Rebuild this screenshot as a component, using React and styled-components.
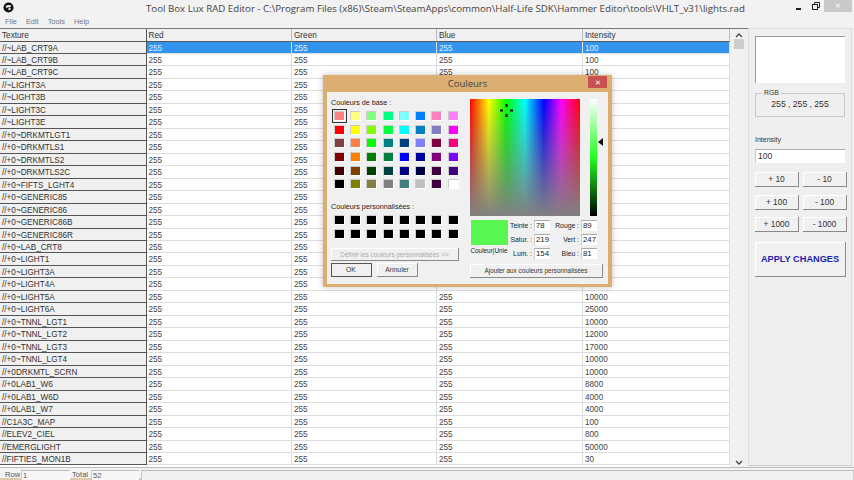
import React from "react";
import styled, { createGlobalStyle } from "styled-components";

const GlobalStyle = createGlobalStyle`
  html, body { margin: 0; padding: 0; background: #f0f0f0; overflow: hidden; }
  * { box-sizing: border-box; }
`;

const rows = [
  ["//~LAB_CRT9A", 100], ["//~LAB_CRT9B", 100], ["//~LAB_CRT9C", 100], ["//~LIGHT3A", 100],
  ["//~LIGHT3B", 100], ["//~LIGHT3C", 100], ["//~LIGHT3E", 100], ["//+0~DRKMTLGT1", 100],
  ["//+0~DRKMTLS1", 100], ["//+0~DRKMTLS2", 100], ["//+0~DRKMTLS2C", 100], ["//+0~FIFTS_LGHT4", 100],
  ["//+0~GENERIC85", 100], ["//+0~GENERIC86", 100], ["//+0~GENERIC86B", 100], ["//+0~GENERIC86R", 100],
  ["//+0~LAB_CRT8", 100], ["//+0~LIGHT1", 100], ["//+0~LIGHT3A", 100], ["//+0~LIGHT4A", 11000],
  ["//+0~LIGHT5A", 10000], ["//+0~LIGHT6A", 25000], ["//+0~TNNL_LGT1", 10000], ["//+0~TNNL_LGT2", 12000],
  ["//+0~TNNL_LGT3", 17000], ["//+0~TNNL_LGT4", 10000], ["//+0DRKMTL_SCRN", 10000], ["//+0LAB1_W6", 8800],
  ["//+0LAB1_W6D", 4000], ["//+0LAB1_W7", 4000], ["//C1A3C_MAP", 100], ["//ELEV2_CIEL", 800],
  ["//EMERGLIGHT", 50000], ["//FIFTIES_MON1B", 30],
];

const swatches = [
  "#ff8080", "#ffff80", "#80ff80", "#00ff80", "#80ffff", "#0080ff", "#ff80c0", "#ff80ff",
  "#ff0000", "#ffff00", "#80ff00", "#00ff40", "#00ffff", "#0080c0", "#8080c0", "#ff00ff",
  "#804040", "#ff8040", "#00ff00", "#008080", "#004080", "#8080ff", "#800040", "#ff0080",
  "#800000", "#ff8000", "#008000", "#008040", "#0000ff", "#0000a0", "#800080", "#8000ff",
  "#400000", "#804000", "#004000", "#004040", "#000080", "#000040", "#400040", "#400080",
  "#000000", "#808000", "#808040", "#808080", "#408080", "#c0c0c0", "#400040", "#ffffff",
];

const Page = styled.div`
  position: relative;
  width: 854px;
  height: 480px;
  display: flex;
  flex-direction: column;
  background: #f0f0f0;
  overflow: hidden;
  font-family: "Liberation Sans", Arial, sans-serif;
  font-size: 8.2px;
  color: #333;
`;

const TitleBar = styled.div`
  height: 15px;
  flex: none;
  display: grid;
  grid-template-columns: 146px minmax(0, 1fr) 146px;
  align-items: center;
  background: #f2f2f2;
`;

const Logo = styled.svg`
  width: 11px;
  height: 11px;
  margin-left: 3px;
`;

const TitleText = styled.div`
  font-family: "Open Sans", sans-serif;
  font-size: 9.7px;
  color: #444;
  white-space: nowrap;
  padding-top: 1px;
`;

const WindowButtons = styled.div`
  display: flex;
  justify-content: flex-end;
  align-items: flex-start;
  height: 15px;
  padding-right: 2px;
`;

const WinButton = styled.div`
  width: ${(p) => p.$w}px;
  height: 12px;
  display: flex;
  align-items: center;
  justify-content: center;
  background: ${(p) => (p.$close ? "#c9c9c9" : "transparent")};
  color: ${(p) => (p.$close ? "#fff" : "#222")};
  font-size: 7px;
`;

const MenuBar = styled.div`
  height: 13px;
  flex: none;
  display: flex;
  gap: 9px;
  align-items: center;
  padding-left: 5px;
  font-size: 7.4px;
  color: #777;
  background: #f2f2f2;
`;

const Main = styled.div`
  flex: 1;
  min-height: 0;
  display: flex;
`;

const Table = styled.div`
  width: 730px;
  flex: none;
  border-top: 1px solid #777;
  background: #fff;
`;

const Row = styled.div`
  display: grid;
  grid-template-columns: 146.5px 145.5px 145px 146px 146.5px;
  height: ${(p) => (p.$header ? "12.5px" : "12.48px")};
  line-height: 13px;
`;

const HeaderCell = styled.div`
  background: #f0f0f0;
  color: #333;
  padding-left: 2px;
  border-right: 1px solid ${(p) => (p.$dark ? "#555" : "#bbb")};
  border-bottom: 1px solid #555;
  white-space: nowrap;
  overflow: hidden;
`;

const Cell = styled.div`
  padding-left: 2px;
  background: ${(p) => (p.$selected ? "#3394ee" : "#fff")};
  color: ${(p) => (p.$selected ? "#dff0ff" : "#444")};
  border-right: 1px solid #ddd;
  border-bottom: 1px solid #ddd;
  white-space: nowrap;
  overflow: hidden;
`;

const ScrollBar = styled.div`
  width: 18px;
  flex: none;
  position: relative;
  background: #f1f1f1;
  border-top: 1px solid #777;
  display: flex;
  flex-direction: column;
  align-items: center;
  justify-content: space-between;
  padding-bottom: 1px;
`;

const ScrollArrow = styled.svg`
  width: 8px;
  height: 8px;
  margin-top: 3px;
`;

const ScrollThumb = styled.div`
  position: absolute;
  top: 10px;
  left: 4px;
  width: 10px;
  height: 10px;
  background: #cdcdcd;
`;

const SidePanel = styled.div`
  flex: none;
  width: 104px;
  margin-bottom: 1px;
  background: #efefef;
  border: 1px solid #dcdcdc;
  border-bottom-color: #d0d0d0;
  display: flex;
  flex-direction: column;
  padding: 7px 6px 0 6px;
`;

const Preview = styled.div`
  height: 47px;
  background: #fff;
  border-top: 1px solid #999;
  border-left: 1px solid #999;
`;

const RgbGroup = styled.fieldset`
  margin: 7px 0 0;
  padding: 0;
  height: 27px;
  border: 1px solid #c8c8c8;
  text-align: center;
  font-size: 8.6px;
  color: #333;
  line-height: 17px;
  legend {
    font-size: 6.8px;
    line-height: 6px;
    text-align: left;
    margin-left: 6px;
    padding: 0 2px;
  }
`;

const FieldLabel = styled.div`
  margin-top: 18px;
  font-size: 7px;
  line-height: 9px;
`;

const IntensityInput = styled.div`
  margin-top: 5px;
  height: 14px;
  padding-left: 2px;
  background: #fff;
  border-top: 1px solid #aaa;
  border-left: 1px solid #ccc;
  font-size: 8.6px;
  line-height: 13px;
`;

const StepGrid = styled.div`
  margin-top: 9px;
  display: grid;
  grid-template-columns: 44px 44px;
  column-gap: 4px;
  grid-auto-rows: 15px;
  row-gap: 7.5px;
`;

const RaisedButton = styled.div`
  display: flex;
  align-items: center;
  justify-content: center;
  background: #f0f0f0;
  border-right: 1px solid #8a8a8a;
  border-bottom: 1px solid #8a8a8a;
  box-shadow: inset 1px 1px 0 #fff;
  font-size: 8.4px;
  color: #333;
  white-space: nowrap;
`;

const ApplyButton = styled(RaisedButton)`
  margin-top: 10px;
  width: 91px;
  height: 35px;
  color: #2222b0;
  font-weight: bold;
  font-size: 9.2px;
`;

const StatusBar = styled.div`
  height: 13px;
  flex: none;
  display: flex;
  align-items: flex-start;
  padding-top: 2px;
  padding-left: 5px;
  background: #f3f3f3;
  border-top: 1px solid #bbb;
  border-bottom: 2px solid #e0c9a8;
  font-size: 7.6px;
  line-height: 9px;
  color: #555;
`;

const StatusLabel = styled.span`
  width: ${(p) => p.$w}px;
  flex: none;
`;

const StatusField = styled.div`
  width: ${(p) => p.$w}px;
  flex: none;
  height: 10px;
  line-height: 9px;
  padding-left: 1px;
  margin-right: ${(p) => p.$gap || 0}px;
  border-top: 1px solid #bbb;
  border-left: 1px solid #ccc;
  background: ${(p) => (p.$grow ? "#f0f0f0" : "#f7f7f7")};
  ${(p) => p.$grow && "flex: 1; border-right: 1px solid #ccc;"}
`;

const Dialog = styled.div`
  position: absolute;
  left: 323px;
  top: 75px;
  width: 289px;
  height: 212px;
  background: #dcae72;
  box-shadow: 0 0 6px rgba(0, 0, 0, 0.25);
  display: flex;
  flex-direction: column;
  padding: 0 4px 4px;
  color: #222;
`;

const DialogTitle = styled.div`
  position: relative;
  height: 17px;
  flex: none;
  display: flex;
  align-items: center;
  justify-content: center;
  font-family: "Open Sans", sans-serif;
  font-size: 9.5px;
  color: #444;
`;

const DialogClose = styled.div`
  position: absolute;
  right: 1px;
  top: 1px;
  width: 19px;
  height: 12px;
  background: #c75050;
  color: #fff;
  font-size: 7px;
  display: flex;
  align-items: center;
  justify-content: center;
`;

const DialogBody = styled.div`
  flex: 1;
  display: flex;
  background: #f0f0f0;
  padding: 6px 4px 6px 4px;
  font-size: 7.2px;
`;

const DialogLeft = styled.div`
  width: 139px;
  flex: none;
  display: flex;
  flex-direction: column;
`;

const DialogRight = styled.div`
  flex: 1;
  display: flex;
  flex-direction: column;
`;

const SwatchLabel = styled.div`
  line-height: 10px;
  margin-top: ${(p) => p.$top || 0}px;
`;

const SwatchGrid = styled.div`
  display: grid;
  grid-template-columns: repeat(8, 16.3px);
  grid-auto-rows: ${(p) => p.$rowH}px;
  justify-items: center;
  align-items: center;
  margin-top: ${(p) => p.$top}px;
`;

const Swatch = styled.div`
  width: 11px;
  height: 10px;
  background: ${(p) => p.$color};
  border: 1px solid #ccc;
  border-right-color: #fff;
  border-bottom-color: #fff;
  ${(p) => p.$active && "outline: 1px solid #333; outline-offset: 1px;"}
`;

const DefineButton = styled(RaisedButton)`
  margin-top: 7px;
  width: 128px;
  height: 13px;
  color: #aaa;
  font-size: 6.4px;
`;

const ButtonRow = styled.div`
  display: flex;
  gap: 5px;
  margin-top: 2px;
`;

const DialogButton = styled(RaisedButton)`
  width: ${(p) => p.$w}px;
  height: 14px;
  font-size: 6.8px;
  ${(p) => p.$primary && "outline: 1px solid #555; outline-offset: -1px;"}
`;

const PickerRow = styled.div`
  display: flex;
  align-items: flex-start;
`;

const Spectrum = styled.div`
  position: relative;
  width: 110px;
  height: 117px;
  margin-top: 1px;
  background: linear-gradient(to bottom, rgba(128, 128, 128, 0), #808080),
    linear-gradient(to right, #ff0000, #ffff00 17%, #00ff00 33%, #00ffff 50%, #0000ff 67%, #ff00ff 83%, #ff0000);
`;

const Crosshair = styled.svg`
  position: absolute;
  left: 30px;
  top: 5px;
  width: 13px;
  height: 13px;
`;

const LumBar = styled.div`
  position: relative;
  width: 7px;
  height: 117px;
  margin-top: 1px;
  margin-left: 10px;
  background: linear-gradient(to bottom, #ffffff, #22ff22 50%, #000000);
`;

const LumArrow = styled.div`
  position: absolute;
  left: 8px;
  top: 39px;
  border: 4px solid transparent;
  border-left: 0;
  border-right: 5px solid #111;
`;

const ValuesRow = styled.div`
  display: flex;
  margin-top: 4px;
  height: 41px;
`;

const ColorBlock = styled.div`
  width: 38px;
  flex: none;
  display: flex;
  flex-direction: column;
  align-items: center;
`;

const SolidColor = styled.div`
  width: 37px;
  height: 25px;
  background: #59f751;
`;

const SolidLabel = styled.div`
  margin-top: 2px;
  font-size: 6.4px;
  white-space: nowrap;
`;

const ValueGrid = styled.div`
  display: grid;
  grid-template-columns: 25px 16px 31px 16px;
  grid-auto-rows: 14px;
  margin-left: 1px;
`;

const ValueLabel = styled.div`
  text-align: right;
  padding-right: 2px;
  line-height: 12px;
  white-space: nowrap;
  font-size: 6.8px;
`;

const ValueInput = styled.div`
  height: 11px;
  background: #fff;
  border-top: 1px solid #aaa;
  border-left: 1px solid #ccc;
  padding-left: 1px;
  line-height: 10px;
  font-size: 7.8px;
`;

const AddButton = styled(DialogButton)`
  margin-top: 3px;
  font-size: 6.4px;
`;

const ColorValues = () => {
  const values = [["Teinte :", 78, "Rouge :", 89], ["Satur. :", 219, "Vert :", 247], ["Lum. :", 154, "Bleu :", 81]];
  return (
    <ValueGrid>
      {values.map((v) => (
        <React.Fragment key={v[0]}>
          <ValueLabel>{v[0]}</ValueLabel>
          <ValueInput>{v[1]}</ValueInput>
          <ValueLabel>{v[2]}</ValueLabel>
          <ValueInput>{v[3]}</ValueInput>
        </React.Fragment>
      ))}
    </ValueGrid>
  );
};

export default function App() {
  return (
    <Page>
      <GlobalStyle />
      <TitleBar>
        <Logo viewBox="0 0 22 22">
          <circle cx="11" cy="11" r="10" fill="#111" />
          <path d="M5 9c3-4 9-4 12-1l-3 3c-2-1-5-1-7 1z" fill="#eee" />
          <circle cx="13" cy="14" r="2.5" fill="#ddd" />
        </Logo>
        <TitleText>
          Tool Box Lux RAD Editor - C:\Program Files (x86)\Steam\SteamApps\common\Half-Life SDK\Hammer Editor\tools\VHLT_v31\lights.rad
        </TitleText>
        <WindowButtons>
          <WinButton $w={17}>
            <svg width="7" height="7" viewBox="0 0 7 7"><rect x="1" y="5" width="5" height="2" fill="#222" /></svg>
          </WinButton>
          <WinButton $w={17}>
            <svg width="8" height="8" viewBox="0 0 8 8" fill="none" stroke="#222">
              <rect x="0.5" y="2.5" width="5" height="5" />
              <path d="M2.5 2V.5h5v5H6" />
            </svg>
          </WinButton>
          <WinButton $w={28} $close>✕</WinButton>
        </WindowButtons>
      </TitleBar>
      <MenuBar>
        <span>File</span>
        <span>Edit</span>
        <span>Tools</span>
        <span>Help</span>
      </MenuBar>
      <Main>
        <Table>
          <Row $header>
            <HeaderCell $dark>Texture</HeaderCell>
            <HeaderCell>Red</HeaderCell>
            <HeaderCell>Green</HeaderCell>
            <HeaderCell>Blue</HeaderCell>
            <HeaderCell>Intensity</HeaderCell>
          </Row>
          {rows.map((r, i) => (
            <Row key={r[0]}>
              <HeaderCell $dark>{r[0]}</HeaderCell>
              <Cell $selected={i === 0}>255</Cell>
              <Cell $selected={i === 0}>255</Cell>
              <Cell $selected={i === 0}>255</Cell>
              <Cell $selected={i === 0}>{r[1]}</Cell>
            </Row>
          ))}
        </Table>
        <ScrollBar>
          <ScrollArrow viewBox="0 0 8 8" fill="none" stroke="#444" strokeWidth="1.3">
            <path d="M1 5l3-3 3 3" />
          </ScrollArrow>
          <ScrollThumb />
          <ScrollArrow viewBox="0 0 8 8" fill="none" stroke="#444" strokeWidth="1.3">
            <path d="M1 3l3 3 3-3" />
          </ScrollArrow>
        </ScrollBar>
        <SidePanel>
          <Preview />
          <RgbGroup>
            <legend>RGB</legend>
            255 , 255 , 255
          </RgbGroup>
          <FieldLabel>Intensity</FieldLabel>
          <IntensityInput>100</IntensityInput>
          <StepGrid>
            <RaisedButton>+ 10</RaisedButton>
            <RaisedButton>- 10</RaisedButton>
            <RaisedButton>+ 100</RaisedButton>
            <RaisedButton>- 100</RaisedButton>
            <RaisedButton>+ 1000</RaisedButton>
            <RaisedButton>- 1000</RaisedButton>
          </StepGrid>
          <ApplyButton>APPLY CHANGES</ApplyButton>
        </SidePanel>
      </Main>
      <StatusBar>
        <StatusLabel $w={16}>Row</StatusLabel>
        <StatusField $w={49} $gap={2}>1</StatusField>
        <StatusLabel $w={19}>Total</StatusLabel>
        <StatusField $w={48} $gap={2}>52</StatusField>
        <StatusField $grow />
      </StatusBar>
      <Dialog>
        <DialogTitle>
          Couleurs
          <DialogClose>✕</DialogClose>
        </DialogTitle>
        <DialogBody>
          <DialogLeft>
            <SwatchLabel>Couleurs de base :</SwatchLabel>
            <SwatchGrid $rowH={13.7} $top={1}>
              {swatches.map((c, i) => (
                <Swatch key={i} $color={c} $active={i === 0} />
              ))}
            </SwatchGrid>
            <SwatchLabel $top={11}>Couleurs personnalisées :</SwatchLabel>
            <SwatchGrid $rowH={14} $top={1}>
              {Array.from({ length: 16 }).map((_, i) => (
                <Swatch key={i} $color="#000" />
              ))}
            </SwatchGrid>
            <DefineButton>Définir les couleurs personnalisées &gt;&gt;</DefineButton>
            <ButtonRow>
              <DialogButton $w={41} $primary>OK</DialogButton>
              <DialogButton $w={41}>Annuler</DialogButton>
            </ButtonRow>
          </DialogLeft>
          <DialogRight>
            <PickerRow>
              <Spectrum>
                <Crosshair viewBox="0 0 13 13" fill="#111">
                  <rect x="5.5" y="0" width="2" height="3" />
                  <rect x="5.5" y="10" width="2" height="3" />
                  <rect x="0" y="5.5" width="3" height="2" />
                  <rect x="10" y="5.5" width="3" height="2" />
                </Crosshair>
              </Spectrum>
              <LumBar>
                <LumArrow />
              </LumBar>
            </PickerRow>
            <ValuesRow>
              <ColorBlock>
                <SolidColor />
                <SolidLabel>Couleur|Unie</SolidLabel>
              </ColorBlock>
              <ColorValues />
            </ValuesRow>
            <AddButton $w={133}>Ajouter aux couleurs personnalisées</AddButton>
          </DialogRight>
        </DialogBody>
      </Dialog>
    </Page>
  );
}
